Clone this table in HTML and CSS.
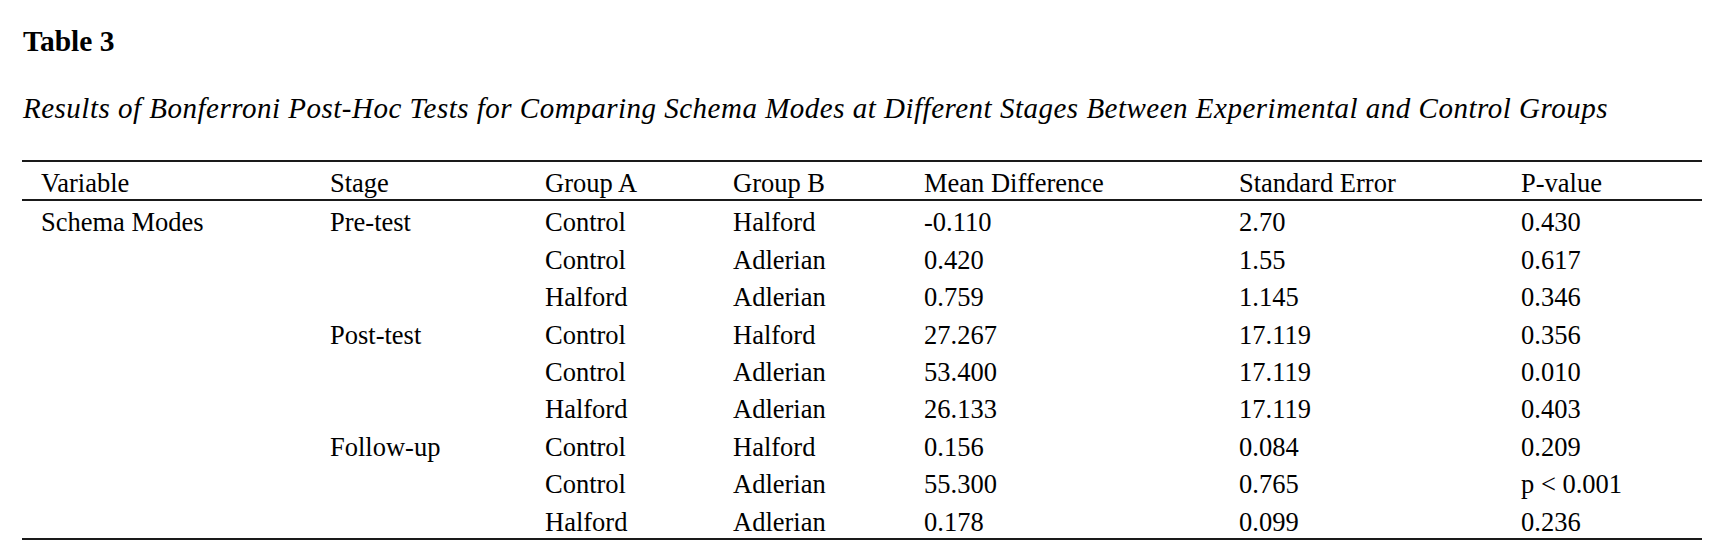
FILE: index.html
```html
<!DOCTYPE html>
<html lang="en">
<head>
<meta charset="utf-8">
<title>Table 3</title>
<link rel="stylesheet" href="styles.css">
</head>
<body>
<div class="page">
  <h1 class="table-label">Table 3</h1>
  <p class="table-title">Results of Bonferroni Post-Hoc Tests for Comparing Schema Modes at Different Stages Between Experimental and Control Groups</p>
  <table class="results">
    <colgroup>
      <col class="c-var">
      <col class="c-stage">
      <col class="c-ga">
      <col class="c-gb">
      <col class="c-md">
      <col class="c-se">
      <col class="c-p">
    </colgroup>
    <thead>
      <tr>
        <th>Variable</th>
        <th>Stage</th>
        <th>Group A</th>
        <th>Group B</th>
        <th>Mean Difference</th>
        <th>Standard Error</th>
        <th>P-value</th>
      </tr>
    </thead>
    <tbody>
      <tr><td>Schema Modes</td><td>Pre-test</td><td>Control</td><td>Halford</td><td>-0.110</td><td>2.70</td><td>0.430</td></tr>
      <tr><td></td><td></td><td>Control</td><td>Adlerian</td><td>0.420</td><td>1.55</td><td>0.617</td></tr>
      <tr><td></td><td></td><td>Halford</td><td>Adlerian</td><td>0.759</td><td>1.145</td><td>0.346</td></tr>
      <tr><td></td><td>Post-test</td><td>Control</td><td>Halford</td><td>27.267</td><td>17.119</td><td>0.356</td></tr>
      <tr><td></td><td></td><td>Control</td><td>Adlerian</td><td>53.400</td><td>17.119</td><td>0.010</td></tr>
      <tr><td></td><td></td><td>Halford</td><td>Adlerian</td><td>26.133</td><td>17.119</td><td>0.403</td></tr>
      <tr><td></td><td>Follow-up</td><td>Control</td><td>Halford</td><td>0.156</td><td>0.084</td><td>0.209</td></tr>
      <tr><td></td><td></td><td>Control</td><td>Adlerian</td><td>55.300</td><td>0.765</td><td>p &lt; 0.001</td></tr>
      <tr><td></td><td></td><td>Halford</td><td>Adlerian</td><td>0.178</td><td>0.099</td><td>0.236</td></tr>
    </tbody>
  </table>
</div>
</body>
</html>
```

FILE: styles.css
```css
html, body {
  margin: 0;
  padding: 0;
  background: #ffffff;
}

.page {
  padding: 25px 19px 0 22px;
  font-family: "Liberation Serif", "Times New Roman", serif;
  color: #000000;
}

.table-label {
  margin: 0 0 0 1px;
  font-size: 29.5px;
  line-height: 32px;
  font-weight: bold;
}

.table-title {
  margin: 36px 0 0 1px;
  font-size: 29px;
  line-height: 30px;
  letter-spacing: 0.5px;
  font-style: italic;
  white-space: nowrap;
}

.results {
  margin-top: 37px;
  width: 1680px;
  table-layout: fixed;
  border-collapse: collapse;
  font-size: 26.5px;
  line-height: 29.4px;
  border-top: 2px solid #1a1a1a;
  border-bottom: 2px solid #1a1a1a;
}

.c-var { width: 288px; }
.c-stage { width: 215px; }
.c-ga { width: 188px; }
.c-gb { width: 191px; }
.c-md { width: 315px; }
.c-se { width: 282px; }
.c-p { width: 201px; }

.results th {
  font-weight: normal;
  text-align: left;
  padding: 7px 0 1px 20px;
  border-bottom: 2px solid #1a1a1a;
  white-space: nowrap;
}

.results td {
  text-align: left;
  padding: 7px 0 1px 20px;
  white-space: nowrap;
}

.results th:first-child,
.results td:first-child {
  padding-left: 19px;
}
```
